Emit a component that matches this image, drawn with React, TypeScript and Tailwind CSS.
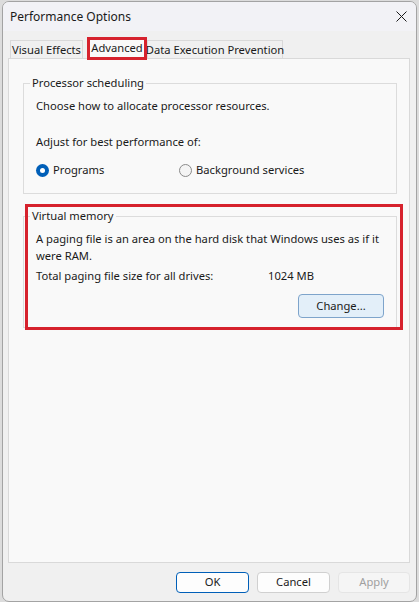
import React from 'react';

const font = { fontFamily: '"Noto Sans", "Segoe UI", Arial, sans-serif' };

const Radio = ({ checked, label }: { checked: boolean; label: string }) => (
  <label className="flex items-center gap-[4px] h-4">
    {checked ? (
      <span className="w-[13px] h-[13px] rounded-full bg-[#005fb8] flex items-center justify-center">
        <span className="w-[5px] h-[5px] rounded-full bg-white" />
      </span>
    ) : (
      <span className="w-[13px] h-[13px] rounded-full border border-[#8a8a8a] bg-[#f4f4f4]" />
    )}
    <span>{label}</span>
  </label>
);

const Tab = ({ label, width }: { label: string; width: string }) => (
  <div className={`h-[18px] ${width} whitespace-nowrap border border-b-0 border-[#d9d9d9] bg-[#f0f0f0] flex items-center justify-center pt-[2px]`}>
    {label}
  </div>
);

export default function App() {
  return (
    <div className="w-[419px] h-[602px] bg-[#dcdcdc] overflow-hidden text-[11.2px] text-[#1a1a1a]" style={font}>
      <div className="ml-[2px] mt-[1px] w-[415px] h-[601px] border border-[#a3a3a3] rounded-[7px] overflow-hidden bg-[#f0f0f0] flex flex-col">
        {/* title bar */}
        <div className="h-[29px] bg-[#f2f2f6] flex items-center justify-between pl-[7px] pr-[8px] text-[12px]">
          <span>Performance Options</span>
          <svg width="11" height="11" viewBox="0 0 11 11" className="mr-[1px]">
            <path d="M0.5 0.5 L10.5 10.5 M10.5 0.5 L0.5 10.5" stroke="#1a1a1a" strokeWidth="1" />
          </svg>
        </div>

        {/* body */}
        <div className="flex-1 flex flex-col pt-[9px] pl-[5px] pr-[6px]">
          <div className="flex items-end h-[18px] pl-[2px]">
            <Tab label="Visual Effects" width="w-[73px]" />
            <div className="relative z-10 ml-[4px] -mb-[2px] h-[23px] w-[60px] border-[3px] border-[#d6222d] bg-[#f9f9f9] flex items-center justify-center pb-[1px]">
              Advanced
            </div>
            <Tab label="Data Execution Prevention" width="w-[136px]" />
          </div>

          <div className="h-[505px] w-[402px] border border-[#d9d9d9] bg-[#f9f9f9] pl-[14px] pr-[12px] pt-[16px]">
            <fieldset className="border border-[#dcdcdc] h-[119px]">
              <legend className="ml-[6px] px-[2px] leading-4">Processor scheduling</legend>
              <div className="pl-[12px]">
                <div className="pt-[7px] leading-4">Choose how to allocate processor resources.</div>
                <div className="mt-[20px] leading-4">Adjust for best performance of:</div>
                <div className="mt-[12px] flex">
                  <div className="w-[143px]">
                    <Radio checked label="Programs" />
                  </div>
                  <Radio checked={false} label="Background services" />
                </div>
              </div>
            </fieldset>

            <div className="relative mt-[14px]">
              <fieldset className="border border-[#dcdcdc] h-[120px]">
                <legend className="ml-[6px] px-[2px] leading-4">Virtual memory</legend>
                <div className="pl-[12px] pr-[12px]">
                  <div className="pt-[6px] leading-[17px] whitespace-nowrap">
                    A paging file is an area on the hard disk that Windows uses as if it
                    <br />
                    were RAM.
                  </div>
                  <div className="mt-[4px] leading-4 flex">
                    <span className="w-[232px]">Total paging file size for all drives:</span>
                    <span>1024 MB</span>
                  </div>
                  <div className="mt-[10px] flex justify-end">
                    <button className="w-[86px] h-[24px] rounded-[4px] border border-[#7ea4cb] bg-[#e3eff9] text-[#1a1a1a]">
                      Change...
                    </button>
                  </div>
                </div>
              </fieldset>
              <div className="absolute left-[2px] -right-[6px] -top-[4px] h-[126px] border-[3px] border-[#d6222d] pointer-events-none" />
            </div>
          </div>

          <div className="mt-[9px] flex justify-end gap-[8px]">
            <button className="w-[73px] h-[21px] rounded-[4px] border-[1.5px] border-[#005fb8] bg-[#fdfdfd]">OK</button>
            <button className="w-[73px] h-[21px] rounded-[4px] border border-[#d0d0d0] bg-[#fdfdfd]">Cancel</button>
            <button className="w-[72px] h-[21px] rounded-[4px] border border-[#e5e5e5] bg-[#f5f5f5] text-[#a0a0a0]">Apply</button>
          </div>
        </div>
      </div>
    </div>
  );
}
